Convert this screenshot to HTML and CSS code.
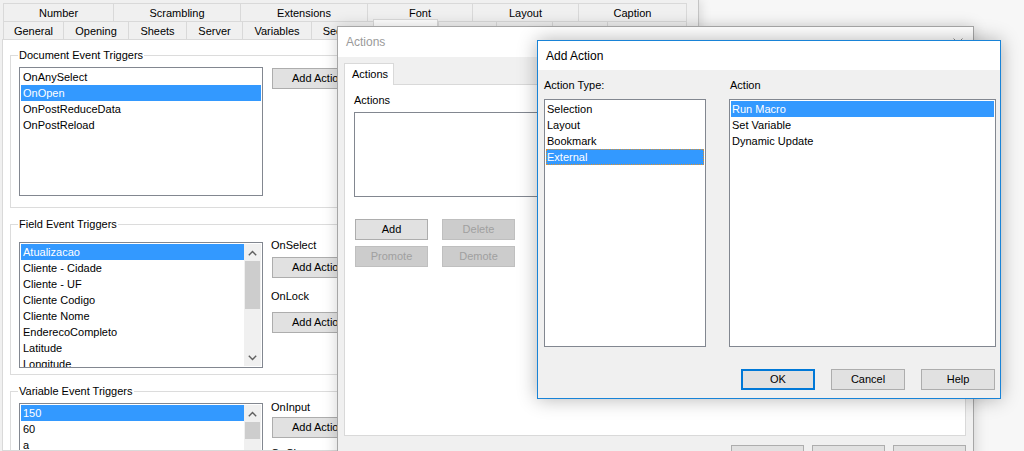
FILE: index.html
```html
<!DOCTYPE html>
<html>
<head>
<meta charset="utf-8">
<title>Document Properties - Triggers</title>
<link rel="stylesheet" href="styles.css">
</head>
<body>
<div class="desktop">

  <div class="window main-window">
    <div class="tab-rows">
      <div class="tab-row row-back">
        <div class="tab">Number</div>
        <div class="tab">Scrambling</div>
        <div class="tab">Extensions</div>
        <div class="tab">Font</div>
        <div class="tab">Layout</div>
        <div class="tab">Caption</div>
      </div>
      <div class="tab-row row-front">
        <div class="tab">General</div>
        <div class="tab">Opening</div>
        <div class="tab">Sheets</div>
        <div class="tab">Server</div>
        <div class="tab">Variables</div>
        <div class="tab">Security</div>
        <div class="tab selected">Triggers</div>
        <div class="tab">Groups</div>
        <div class="tab">Tables</div>
        <div class="tab">Sort</div>
        <div class="tab">Presentation</div>
      </div>
    </div>
    <div class="tab-page">
      <fieldset class="group group-doc">
        <legend>Document Event Triggers</legend>
        <div class="group-row">
          <div class="listbox lb-trigger lb-doc">
            <div class="item">OnAnySelect</div>
            <div class="item sel">OnOpen</div>
            <div class="item">OnPostReduceData</div>
            <div class="item">OnPostReload</div>
          </div>
          <div class="side side-doc">
            <button class="btn btn-wide">Add Action(s)...</button>
          </div>
        </div>
      </fieldset>

      <fieldset class="group group-field">
        <legend>Field Event Triggers</legend>
        <div class="group-row">
          <div class="listbox lb-trigger lb-field">
            <div class="items">
              <div class="item sel">Atualizacao</div>
              <div class="item">Cliente - Cidade</div>
              <div class="item">Cliente - UF</div>
              <div class="item">Cliente Codigo</div>
              <div class="item">Cliente Nome</div>
              <div class="item">EnderecoCompleto</div>
              <div class="item">Latitude</div>
              <div class="item">Longitude</div>
            </div>
            <div class="scrollbar">
              <div class="sb-arrow"><svg width="9" height="6" viewBox="0 0 9 6"><polyline points="0.8,5.2 4.5,1.5 8.2,5.2" fill="none" stroke="#606060" stroke-width="1.4"/></svg></div>
              <div class="sb-thumb"></div>
              <div class="sb-track"></div>
              <div class="sb-arrow"><svg width="9" height="6" viewBox="0 0 9 6"><polyline points="0.8,0.8 4.5,4.5 8.2,0.8" fill="none" stroke="#606060" stroke-width="1.4"/></svg></div>
            </div>
          </div>
          <div class="side side-field">
            <div class="side-label">OnSelect</div>
            <button class="btn btn-wide btn-after-label">Add Action(s)...</button>
            <div class="side-label label-second">OnLock</div>
            <button class="btn btn-wide btn-after-label2">Add Action(s)...</button>
          </div>
        </div>
      </fieldset>

      <fieldset class="group group-var">
        <legend>Variable Event Triggers</legend>
        <div class="group-row">
          <div class="listbox lb-trigger lb-var">
            <div class="items">
              <div class="item sel">150</div>
              <div class="item">60</div>
              <div class="item">a</div>
            </div>
            <div class="scrollbar">
              <div class="sb-arrow"><svg width="9" height="6" viewBox="0 0 9 6"><polyline points="0.8,5.2 4.5,1.5 8.2,5.2" fill="none" stroke="#606060" stroke-width="1.4"/></svg></div>
              <div class="sb-thumb sb-thumb-short"></div>
              <div class="sb-track"></div>
            </div>
          </div>
          <div class="side side-var">
            <div class="side-label">OnInput</div>
            <button class="btn btn-wide btn-after-label-var">Add Action(s)...</button>
            <div class="side-label label-var2">OnChange</div>
          </div>
        </div>
      </fieldset>
    </div>
  </div>

  <div class="window actions-dlg">
    <div class="titlebar">
      <span>Actions</span>
      <svg class="close-x" width="10" height="10" viewBox="0 0 10 10"><path d="M0.5,0.5 L9.5,9.5 M9.5,0.5 L0.5,9.5" stroke="#8a8a8a" stroke-width="1" fill="none"/></svg>
    </div>
    <div class="dlg-body">
      <div class="tabstrip"><div class="tab-single">Actions</div></div>
      <div class="tab-page2">
        <div class="field-label">Actions</div>
        <div class="listbox lb-actions"></div>
        <div class="action-buttons">
          <button class="btn">Add</button>
          <button class="btn btn-disabled">Delete</button>
          <button class="btn btn-disabled">Promote</button>
          <button class="btn btn-disabled">Demote</button>
        </div>
      </div>
      <div class="dlg-buttons">
        <button class="btn">OK</button>
        <button class="btn">Cancel</button>
        <button class="btn">Help</button>
      </div>
    </div>
  </div>

  <div class="window add-dlg">
    <div class="titlebar">
      <span>Add Action</span>
    </div>
    <div class="add-body">
      <div class="add-cols">
        <div class="add-col">
          <div class="col-label">Action Type:</div>
          <div class="listbox add-list">
            <div class="item">Selection</div>
            <div class="item">Layout</div>
            <div class="item">Bookmark</div>
            <div class="item sel focus">External</div>
          </div>
        </div>
        <div class="add-col">
          <div class="col-label col-label-2">Action</div>
          <div class="listbox add-list">
            <div class="item sel">Run Macro</div>
            <div class="item">Set Variable</div>
            <div class="item">Dynamic Update</div>
          </div>
        </div>
      </div>
      <div class="add-buttons">
        <button class="btn btn-default">OK</button>
        <button class="btn">Cancel</button>
        <button class="btn">Help</button>
      </div>
    </div>
  </div>

</div>
</body>
</html>
```

FILE: styles.css
```css
* { box-sizing: border-box; }
html, body { margin: 0; padding: 0; }
body {
  width: 1024px;
  height: 451px;
  overflow: hidden;
  background: #f7f7f7;
  font-family: "Liberation Sans", Arial, sans-serif;
  font-size: 11px;
  color: #000;
}
.desktop { position: relative; width: 1024px; height: 451px; overflow: hidden; }
.window { position: absolute; }

/* ---------- main window ---------- */
.main-window {
  left: 0; top: 0;
  width: 699px; height: 451px;
  z-index: 1;
  background: #f0f0f0;
  border-right: 1px solid #c4c4c4;
  box-shadow: 2px 0 10px rgba(0,0,0,.12);
}
.tab-rows { padding: 3px 0 0 3px; }
.tab-row { display: grid; height: 18px; }
.row-back { grid-template-columns: 110px 127px 127px 105px 106px 109px; }
.row-front { grid-template-columns: 60px 65px 58px 56px 69px 62px 65px 58px 56px 55px 80px; }
.tab {
  border: 1px solid #d9d9d9;
  border-right: none;
  border-bottom: none;
  text-align: center;
  line-height: 18px;
  white-space: nowrap;
  overflow: hidden;
  background: #f0f0f0;
}
.tab:last-child { border-right: 1px solid #d9d9d9; }
.tab.selected {
  background: #fff;
  margin-top: -2px;
  margin-bottom: -1px;
  position: relative;
  z-index: 2;
  border-right: 1px solid #d9d9d9;
  line-height: 20px;
}
.tab-page {
  margin: 0 4px 0 2px;
  height: 412px;
  background: #fff;
  border: 1px solid #d9d9d9;
  padding: 8px 6px 0 7px;
  overflow: hidden;
}
.group {
  margin: 0;
  padding: 5px 8px 0;
  border: 1px solid #dcdcdc;
  min-width: 0;
}
.group + .group { margin-top: 9px; }
.group legend { padding: 0 1px; margin-left: -1px; line-height: 14px; }
.group-doc { height: 160px; }
.group-field { height: 158px; padding-top: 7px; }
.group-var { height: 120px; padding-top: 2px; }
.group-row { display: flex; align-items: flex-start; }

.listbox {
  background: #fff;
  border: 1px solid #828790;
  padding: 1px;
  overflow: hidden;
}
.lb-trigger { width: 244px; flex: none; }
.lb-doc { height: 129px; }
.lb-field { height: 126px; margin-top: 4px; display: flex; }
.lb-var { height: 80px; margin-top: 3px; display: flex; }
.items { flex: 1; min-width: 0; }
.item { height: 16px; line-height: 16px; padding-left: 2px; white-space: nowrap; }
.item.sel { background: #3399ff; color: #fff; }
.item.focus { outline: 1px dotted #e0922e; outline-offset: -1px; }

.scrollbar { width: 17px; flex: none; background: #f0f0f0; display: flex; flex-direction: column; }
.sb-arrow { height: 17px; flex: none; display: flex; align-items: center; justify-content: center; }
.sb-thumb { height: 48px; flex: none; background: #cdcdcd; margin: 0 1px; }
.sb-thumb-short { height: 17px; }
.sb-track { flex: 1; }

.side { margin-left: 9px; display: flex; flex-direction: column; align-items: flex-start; }
.side-doc { margin-top: 1px; }
.side-label { line-height: 14px; margin-left: -1px; }
.btn-after-label { margin-top: 5px; }
.label-second { margin-top: 11px; }
.btn-after-label2 { margin-top: 9px; }
.btn-after-label-var { margin-top: 3px; }
.label-var2 { margin-top: 8px; }

.btn {
  font: inherit;
  color: #000;
  background: #e1e1e1;
  border: 1px solid #adadad;
  height: 21px;
  width: 73px;
  padding: 0;
  text-align: center;
  line-height: 19px;
  white-space: nowrap;
  overflow: hidden;
  flex: none;
}
.btn-wide { width: 94px; text-align: left; padding-left: 19px; }
.btn-disabled { background: #cccccc; border-color: #bfbfbf; color: #a0a0a0; }

/* ---------- Actions dialog ---------- */
.actions-dlg {
  left: 337px; top: 26px;
  width: 637px; height: 440px;
  z-index: 2;
  background: #f0f0f0;
  border: 1px solid #a6a6a6;
  box-shadow: 0 0 14px rgba(0,0,0,.18);
  display: flex;
  flex-direction: column;
}
.titlebar {
  height: 30px;
  flex: none;
  background: #fff;
  display: flex;
  align-items: center;
  justify-content: space-between;
  padding: 0 10px 0 8px;
  font-size: 12px;
}
.actions-dlg .titlebar { color: #9a9a9a; }
.close-x { margin-top: 1px; }
.dlg-body { padding: 6px 7px 0 6px; display: flex; flex-direction: column; }
.tabstrip { display: flex; }
.tab-single {
  width: 50px; height: 22px;
  background: #fff;
  border: 1px solid #d9d9d9;
  border-bottom: none;
  margin-bottom: -1px;
  position: relative;
  z-index: 1;
  padding-left: 7px;
  line-height: 20px;
}
.tab-page2 {
  height: 352px;
  background: #fff;
  border: 1px solid #d9d9d9;
  padding: 8px 9px 0 9px;
}
.field-label { line-height: 14px; }
.lb-actions { height: 85px; width: 602px; margin-top: 5px; }
.action-buttons {
  display: grid;
  grid-template-columns: 73px 73px;
  column-gap: 14px;
  row-gap: 6px;
  margin: 22px 0 0 1px;
}
.dlg-buttons { display: flex; justify-content: flex-end; gap: 8px; margin-top: 9px; }

/* ---------- Add Action dialog ---------- */
.add-dlg {
  left: 537px; top: 40px;
  width: 464px; height: 359px;
  background: #f0f0f0;
  border: 1px solid #1883d7;
  box-shadow: 0 0 18px rgba(0,0,0,.3);
  z-index: 3;
}
.add-dlg .titlebar { height: 29px; color: #000; padding-left: 8px; }
.add-body { padding: 8px 3px 7px 6px; }
.add-cols { display: grid; grid-template-columns: 162px 267px; column-gap: 23px; }
.col-label { line-height: 14px; }
.col-label-2 { padding-left: 1px; }
.add-list { height: 248px; margin-top: 7px; }
.add-list .item { padding-left: 1px; }
.add-buttons { display: flex; justify-content: flex-end; gap: 16px; margin: 22px 2px 0 0; }
.add-buttons .btn { width: 74px; }
.btn-default { border: 2px solid #0078d7; line-height: 17px; }
```
